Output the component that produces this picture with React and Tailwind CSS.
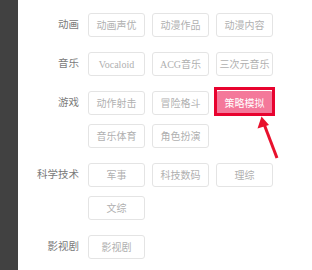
import React from "react";

const cats = [
  { label: "动画", items: ["动画声优", "动漫作品", "动漫内容"] },
  { label: "音乐", items: ["Vocaloid", "ACG音乐", "三次元音乐"] },
  { label: "游戏", items: ["动作射击", "冒险格斗", "策略模拟", "音乐体育", "角色扮演"] },
  { label: "科学技术", items: ["军事", "科技数码", "理综", "文综"] },
  { label: "影视剧", items: ["影视剧"] },
];

export default function App() {
  return (
    <div
      className="relative flex w-[312px] h-[270px] bg-white overflow-hidden"
      style={{ fontFamily: '"Liberation Serif", "Noto Sans CJK SC", serif' }}
    >
      <div className="w-[18px] h-full bg-[#414141] shrink-0" />
      <div className="flex flex-col pt-[13px]">
        {cats.map((c) => (
          <div key={c.label} className="flex mb-[15px]">
            <div className="w-[61px] h-[24px] flex items-center justify-end text-[10.5px] text-[#7a7a7a]">
              {c.label}
            </div>
            <div className="ml-[9px] w-[190px] flex flex-wrap gap-x-[7px] gap-y-[9px]">
              {c.items.map((it) =>
                it === "策略模拟" ? (
                  <div key={it} className="relative w-[57px] h-[24px]">
                    <div className="w-full h-full rounded-[3px] bg-[#f4789a] text-white text-[10px] flex items-center justify-center">
                      {it}
                    </div>
                    <div className="absolute left-[-2px] right-[-2px] top-[-4px] bottom-[-1px] border-[3px] border-[#e8032f]" />
                  </div>
                ) : (
                  <div
                    key={it}
                    className="w-[57px] h-[24px] rounded-[3px] border border-[#e4e4e4] bg-white text-[10px] text-[#b0b0b0] flex items-center justify-center"
                  >
                    {it}
                  </div>
                )
              )}
            </div>
          </div>
        ))}
      </div>
      <svg className="absolute left-0 top-0" width="312" height="270">
        <line x1="277" y1="158" x2="264" y2="124" stroke="#e8112d" strokeWidth="3" />
        <polygon points="261.5,116.5 257.5,128.5 269,125" fill="#e8112d" />
      </svg>
    </div>
  );
}
